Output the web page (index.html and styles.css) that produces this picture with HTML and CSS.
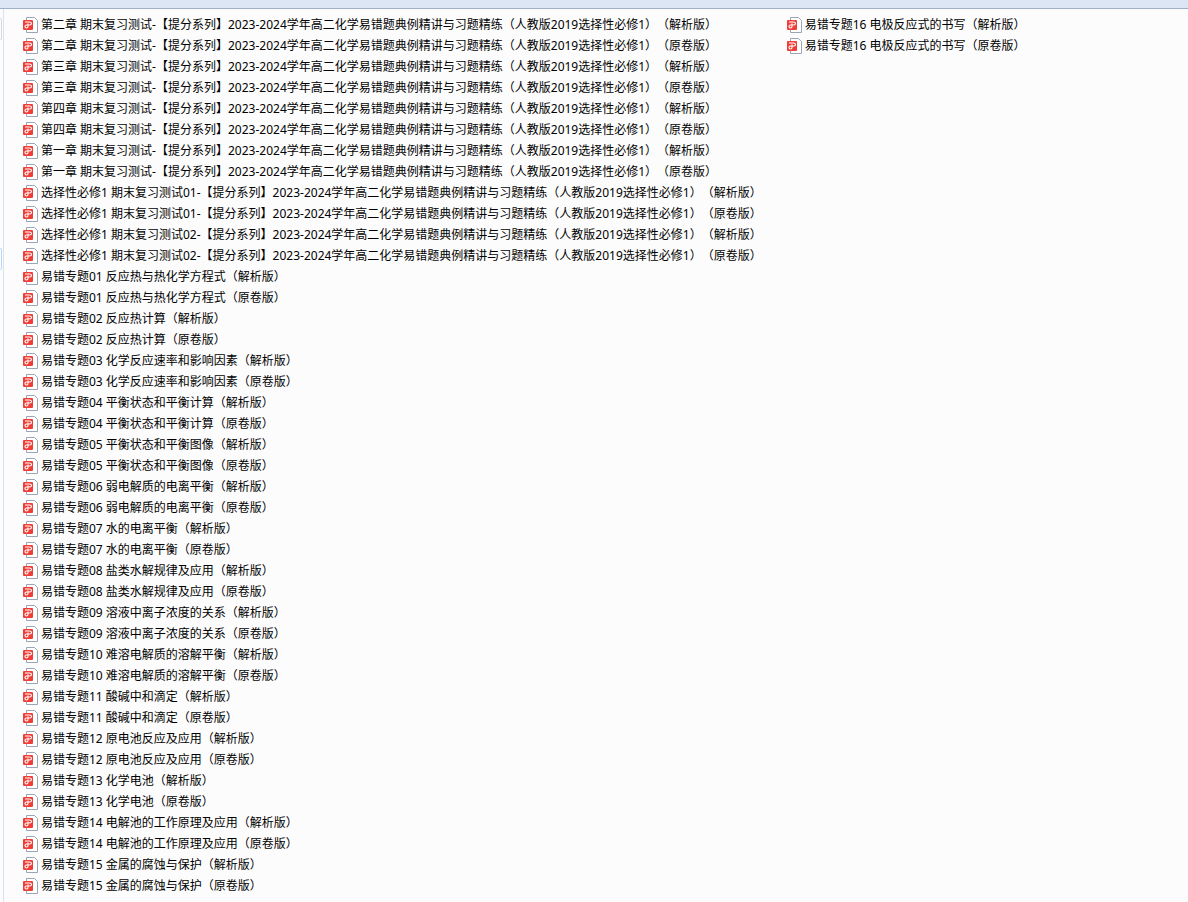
FILE: index.html
```html
<!DOCTYPE html>
<html lang="zh-CN">
<head>
    <meta charset="UTF-8">
    <title>易错题典例精讲与习题精练</title>
    <link rel="stylesheet" href="styles.css">
</head>
<body>
    <!-- PDF icon, reused by every file -->
    <svg class="sprite" aria-hidden="true">
        <symbol id="pdf" viewBox="0 0 15 17">
            <path d="M3.5 1.5H11.5L14.5 4.5V16.5H3.5Z" fill="#fff" stroke="#9aa5b5"/>
            <rect x="0" y="4" width="10" height="10" rx="1" fill="#ee3e37"/>
            <path d="M2 6H6.5Q8.5 6 8.5 7.5Q8.5 9 6.5 9H3.5Q2 9 2 10.5Q2 12 3.5 12Q5 12 5 10.5V7.5" fill="none" stroke="#fff" stroke-width="1.1"/>
        </symbol>
    </svg>

    <header class="toolbar"></header>

    <div class="content">
        <aside class="side">
            <div class="side-mark"></div>
            <div class="side-mark side-mark-blue"></div>
        </aside>

        <!-- File list -->
        <ul class="files" id="files"></ul>
    </div>

    <script>
        const series = '-【提分系列】2023-2024学年高二化学易错题典例精讲与习题精练（人教版2019选择性必修1）';

        const names = [
            '第二章 期末复习测试' + series,
            '第三章 期末复习测试' + series,
            '第四章 期末复习测试' + series,
            '第一章 期末复习测试' + series,
            '选择性必修1 期末复习测试01' + series,
            '选择性必修1 期末复习测试02' + series,
            '易错专题01 反应热与热化学方程式',
            '易错专题02 反应热计算',
            '易错专题03 化学反应速率和影响因素',
            '易错专题04 平衡状态和平衡计算',
            '易错专题05 平衡状态和平衡图像',
            '易错专题06 弱电解质的电离平衡',
            '易错专题07 水的电离平衡',
            '易错专题08 盐类水解规律及应用',
            '易错专题09 溶液中离子浓度的关系',
            '易错专题10 难溶电解质的溶解平衡',
            '易错专题11 酸碱中和滴定',
            '易错专题12 原电池反应及应用',
            '易错专题13 化学电池',
            '易错专题14 电解池的工作原理及应用',
            '易错专题15 金属的腐蚀与保护',
            '易错专题16 电极反应式的书写'
        ];

        const list = document.getElementById('files');

        // every name comes in two editions
        for (const name of names) {
            for (const edition of ['（解析版）', '（原卷版）']) {
                const li = document.createElement('li');
                li.innerHTML = `<a href="#"><svg class="icon" aria-hidden="true"><use href="#pdf"/></svg>${name}${edition}</a>`;
                list.appendChild(li);
            }
        }
    </script>
</body>
</html>
```
FILE: styles.css
```css
* { box-sizing: border-box; }

body {
    margin: 0;
    height: 100vh;
    display: flex;
    flex-direction: column;
    overflow: hidden;
    background-color: #fcfcfc;
    color: #000000;
    font-family: "Noto Sans", "Noto Sans CJK SC", sans-serif;
    font-size: 12px;
    line-height: 21px;
    text-spacing-trim: space-all;
}

.sprite { display: none; }

/* Bottom edge of the toolbar */
.toolbar {
    flex: none;
    height: 9px;
    background-color: #dce6f4;
    border-bottom: 1px solid #a0afc8;
}

.content {
    flex: 1;
    min-height: 0;
    display: flex;
}

/* Right edge of the side pane */
.side {
    flex: none;
    width: 4px;
    border-right: 1px solid #d9e3f0;
}

.side-mark {
    width: 2px;
    height: 22px;
    margin-top: 9px;
    border: 1px solid #d9d9d9;
    border-left: none;
    border-radius: 0 2px 2px 0;
}

.side-mark-blue {
    margin-top: 208px;
    border-color: #b8d6fb;
}

/* Files fill a column from top to bottom, then start the next one */
.files {
    flex: 1;
    min-width: 0;
    margin: 0;
    padding: 5px 19px 0;
    list-style: none;
    display: grid;
    grid-auto-flow: column;
    grid-template-rows: repeat(auto-fill, 21px);
    grid-auto-columns: max-content;
    column-gap: 25px;
}

.files a {
    display: flex;
    align-items: center;
    gap: 3px;
    height: 21px;
    color: inherit;
    text-decoration: none;
    white-space: nowrap;
}

.files a:hover { background-color: #e5f1fb; }

.icon {
    flex: none;
    width: 15px;
    height: 17px;
}
```
